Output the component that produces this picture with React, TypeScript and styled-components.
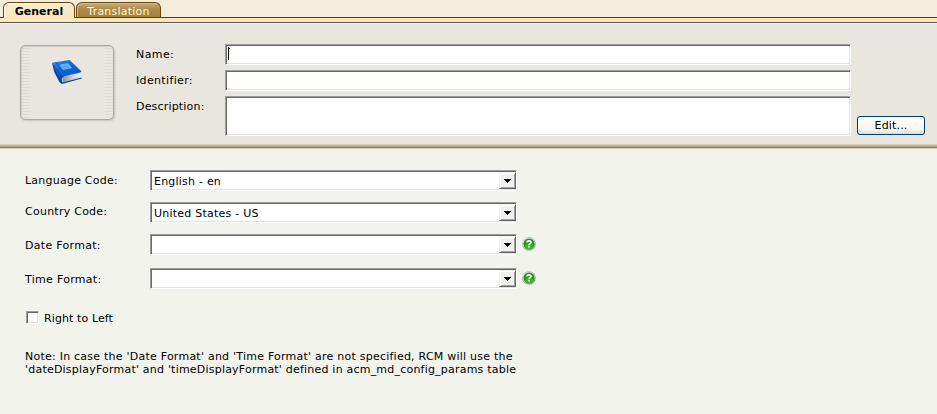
import React from "react";
import styled, { createGlobalStyle } from "styled-components";

const GlobalStyle = createGlobalStyle`
  * { box-sizing: border-box; }
  body {
    margin: 0;
    background: #f2f3ed;
    color: #000;
    font: 11px/13px Verdana, "DejaVu Sans", sans-serif;
  }
`;

const Page = styled.div`
  width: 937px;
  height: 414px;
  overflow: hidden;
  display: flex;
  flex-direction: column;
`;

const TabBar = styled.nav`
  height: 24px;
  flex: none;
  display: flex;
  align-items: flex-start;
  gap: 1px;
  padding: 2px 0 0 3px;
  background: linear-gradient(
    #f5eddc 0 17px, #5a3c08 17px 18px, #fbe5b9 18px 22px, #595959 22px 23px, #f2f1ee 23px
  );
`;

const Tab = styled.div<{ $active?: boolean; $width: number }>`
  width: ${(p) => p.$width}px;
  height: ${(p) => (p.$active ? 16 : 15)}px;
  border: 1px solid #6b4a12;
  border-bottom: 0;
  border-radius: 6px 6px 0 0;
  line-height: 17px;
  text-align: center;
  white-space: nowrap;
  color: ${(p) => (p.$active ? "#000" : "#fff7df")};
  font-weight: ${(p) => (p.$active ? 700 : 400)};
  background: ${(p) =>
    p.$active ? "linear-gradient(#f7ecd5, #fce5bb)" : "linear-gradient(#c7ac7c, #ad8849 45%, #a8823f)"};
  box-shadow: inset 1px 1px 0 ${(p) => (p.$active ? "#fdf5e4" : "#cdb78f")};
`;

const Txt = styled.span<{ $track?: number }>`
  white-space: nowrap;
  letter-spacing: ${(p) => p.$track ?? 0}px;
`;

const Header = styled.header`
  height: 120px;
  flex: none;
  display: flex;
  align-items: flex-start;
  padding: 20px 0 0 20px;
  background: #e9e6df;
`;

const Divider = styled.div`
  height: 5px;
  flex: none;
  background: linear-gradient(
    #d5cdb9 0 1px, #c4ba98 1px 2px, #b3a77e 2px 3px, #938255 3px 4px, #d6cfb9 4px
  );
`;

const Thumb = styled.div`
  width: 94px;
  height: 75px;
  display: flex;
  justify-content: center;
  padding-top: 13px;
  margin: 1px 22px 0 0;
  border: 1px solid #a9a9a7;
  border-radius: 5px;
  background:
    linear-gradient(90deg, transparent 8px, #e9e6df 10px 83px, transparent 85px),
    repeating-linear-gradient(#ebe8e2 0 2px, #dddbd6 2px 3px);
  box-shadow: 1px 1px 2px #c4c2bd, inset 1px 1px 1px #cfcdc8;
`;

const HeaderFields = styled.div`
  display: grid;
  grid-template-columns: 89px 626px;
  grid-template-rows: 21px 21px 40px;
  row-gap: 5px;
`;

const HeaderLabel = styled.label`
  padding-top: 4px;
`;

const sunken = `
  background: #fff;
  border: 1px solid;
  border-color: #9d9d9b #fff #fff #9d9d9b;
  box-shadow: inset 1px 1px 0 #686868, inset -1px -1px 0 #e1e1e1;
`;

const Field = styled.div`
  ${sunken}
  padding: 2px 2px;
`;

const Caret = styled.svg`
  display: block;
`;

const EditButton = styled.button`
  width: 68px;
  height: 19px;
  margin: 72px 0 0 6px;
  padding: 0;
  border: 1px solid #003c74;
  border-radius: 3px;
  color: #000;
  font: inherit;
  line-height: 16px;
  background: linear-gradient(#fff, #f5f5f1 75%, #dedbd0);
`;

const Body = styled.main`
  flex: 1;
  padding: 21px 0 0 25px;
`;

const Row = styled.div<{ $gap: number }>`
  display: flex;
  height: 21px;
  margin-bottom: ${(p) => p.$gap}px;
`;

const RowLabel = styled.label<{ $top: number }>`
  width: 125px;
  padding-top: ${(p) => p.$top}px;
`;

const Select = styled.div`
  ${sunken}
  width: 367px;
  height: 21px;
  display: flex;
  justify-content: space-between;
  padding: 1px 0 0 3px;
  line-height: 20px;
`;

const Arrow = styled.div`
  width: 17px;
  height: 17px;
  display: flex;
  align-items: center;
  justify-content: center;
  background: #f1f1ef;
  border: 1px solid;
  border-color: #f1f1ef #666 #666 #f1f1ef;
  box-shadow: inset 1px 1px 0 #fff, inset -1px -1px 0 #a2a2a0;
`;

const HelpIcon = styled.svg`
  margin: 3px 0 0 5px;
`;

const CheckRow = styled.div`
  display: flex;
  gap: 5px;
  margin: 22px 0 0 1px;
  height: 13px;
  line-height: 15px;
`;

const Checkbox = styled.div`
  ${sunken}
  width: 13px;
  height: 13px;
`;

const Note = styled.p`
  margin: 26px 0 0;
  display: flex;
  flex-direction: column;
`;

function Book() {
  return (
    <svg width="32" height="26" viewBox="0 0 32 26">
      <defs>
        <linearGradient id="cover" x1="0" y1="0" x2="1" y2="1">
          <stop offset="0" stopColor="#2a8cf0" />
          <stop offset=".5" stopColor="#0b66d8" />
          <stop offset="1" stopColor="#0450c6" />
        </linearGradient>
        <linearGradient id="pages" x1="0" y1="0" x2="1" y2="0">
          <stop offset="0" stopColor="#8f8f8f" />
          <stop offset=".6" stopColor="#d5d3cf" />
          <stop offset="1" stopColor="#eeece8" />
        </linearGradient>
      </defs>
      <path d="M11.3 17 29.5 12.5 29 19 12 23.8z" fill="url(#pages)" />
      <path d="M1 3.8 18.6 1 30.6 12.4 29.2 13.6 13 17.2 11.6 18.8z" fill="url(#cover)" />
      <path d="M1 3.8 11.8 17.4 10.8 20 11.6 23.6 10.4 25 8.4 23 3.2 13z" fill="#0747b0" />
      <path d="M4.8 3.6 14.2 16.4" stroke="#0750b8" strokeWidth=".8" fill="none" />
      <path d="M3.2 8 9.4 18.6" stroke="#1a66d6" strokeWidth="1" fill="none" />
      <path d="M9 6 17.2 4.6 20.6 8.8 12.2 10.4z" fill="#5fa6ee" stroke="#8fc2f4" strokeWidth=".6" />
      <path d="M10.6 24.3 30.6 19" stroke="#063fa4" strokeWidth="1.2" fill="none" />
    </svg>
  );
}

function Help() {
  return (
    <HelpIcon width="14" height="14" viewBox="0 0 14 14">
      <circle cx="7" cy="7" r="6.8" fill="#9f9f9f" />
      <circle cx="6.7" cy="6.6" r="6.2" fill="#dcdcdc" />
      <circle cx="7" cy="7" r="5.5" fill="#1d9a12" />
      <ellipse cx="7" cy="9.2" rx="4" ry="2.8" fill="#38b526" />
      <path d="M5 5.5C5 3.4 9 3.4 9 5.4 9 6.8 7 6.6 7 8.2" fill="none" stroke="#fff" strokeWidth="1.6" />
      <path d="M6.2 9h1.6v1.5H6.2z" fill="#fff" />
    </HelpIcon>
  );
}

const rows = [
  { label: "Language Code:", track: 0.23, value: "English - en", valueTrack: 0.22, top: 4, gap: 11 },
  { label: "Country Code:", track: 0.25, value: "United States - US", valueTrack: 0.23, top: 3, gap: 11 },
  { label: "Date Format:", track: 0.3, value: "", valueTrack: 0, top: 5, gap: 13, help: true },
  { label: "Time Format:", track: 0.3, value: "", valueTrack: 0, top: 5, gap: 0, help: true },
];

export default function App() {
  return (
    <>
      <GlobalStyle />
      <Page>
        <TabBar>
          <Tab $active $width={72}><Txt>General</Txt></Tab>
          <Tab $width={85}><Txt $track={0.22}>Translation</Txt></Tab>
        </TabBar>
        <Header>
          <Thumb><Book /></Thumb>
          <HeaderFields>
            <HeaderLabel><Txt $track={0.4}>Name:</Txt></HeaderLabel>
            <Field>
              <Caret width="3" height="14" shapeRendering="crispEdges">
                <path d="M0 0h1v13h-1zM1 1h1v1h-1z" />
              </Caret>
            </Field>
            <HeaderLabel><Txt $track={0.35}>Identifier:</Txt></HeaderLabel>
            <Field />
            <HeaderLabel><Txt $track={0.18}>Description:</Txt></HeaderLabel>
            <Field />
          </HeaderFields>
          <EditButton><Txt $track={0.15}>Edit...</Txt></EditButton>
        </Header>
        <Divider />
        <Body>
          {rows.map((r) => (
            <Row key={r.label} $gap={r.gap}>
              <RowLabel $top={r.top}><Txt $track={r.track}>{r.label}</Txt></RowLabel>
              <Select>
                <Txt $track={r.valueTrack}>{r.value}</Txt>
                <Arrow>
                  <svg width="7" height="4" shapeRendering="crispEdges">
                    <path d="M0 0h7v1h-7zM1 1h5v1h-5zM2 2h3v1h-3zM3 3h1v1h-1z" />
                  </svg>
                </Arrow>
              </Select>
              {r.help && <Help />}
            </Row>
          ))}
          <CheckRow>
            <Checkbox />
            <Txt $track={0.1}>Right to Left</Txt>
          </CheckRow>
          <Note>
            <Txt $track={0.235}>Note: In case the 'Date Format' and 'Time Format' are not specified, RCM will use the</Txt>
            <Txt $track={0.21}>'dateDisplayFormat' and 'timeDisplayFormat' defined in acm_md_config_params table</Txt>
          </Note>
        </Body>
      </Page>
    </>
  );
}
